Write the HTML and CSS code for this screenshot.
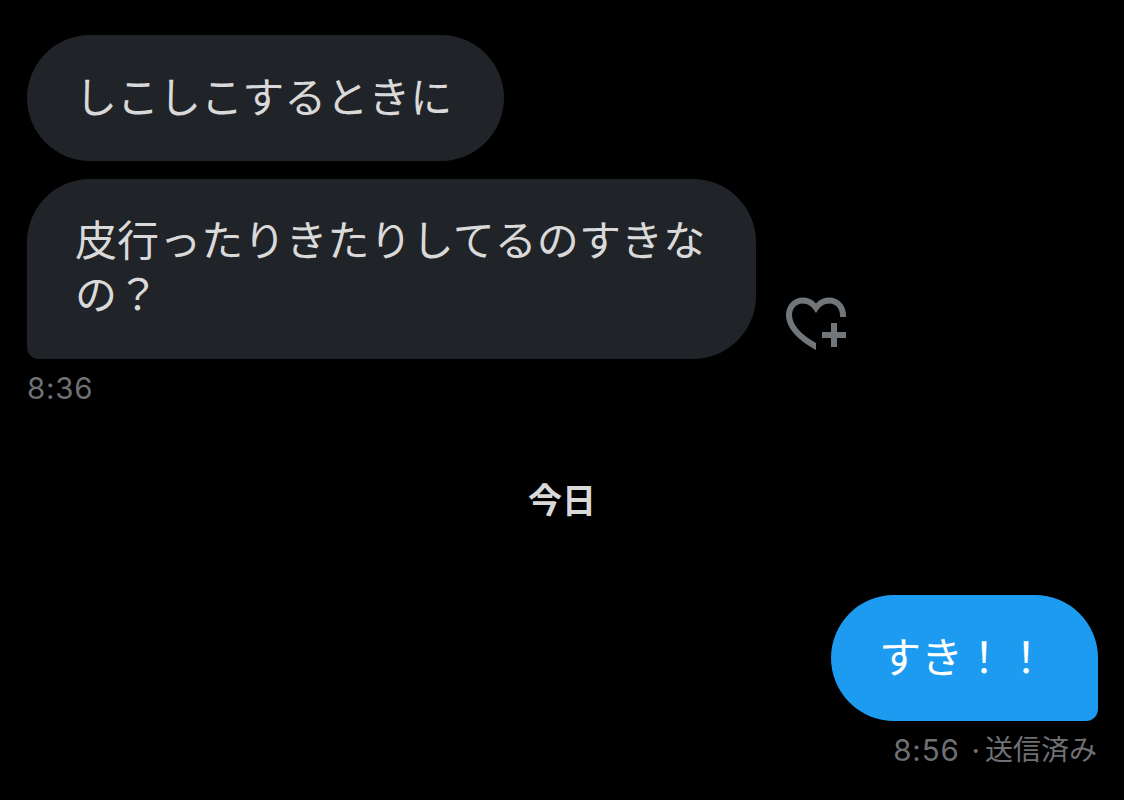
FILE: index.html
```html
<!DOCTYPE html>
<html lang="ja">
<head>
<meta charset="utf-8">
<title>メッセージ</title>
<link rel="stylesheet" href="styles.css">
</head>
<body>
<main class="chat">
  <div class="bubble received">しこしこするときに</div>
  <div class="row">
    <div class="bubble received last">皮行ったりきたりしてるのすきな<br>の？</div>
    <svg class="react" viewBox="0 0 62 54" width="62" height="54" fill="currentColor" aria-label="リアクション">
      <path d="M31 6.500C34.500 2.500 39 .6 44 .6C54 .6 61 8.500 61 18V20H55V18C55 11.500 50.500 6.500 44.500 6.500C39 6.500 35 9.300 31 16C27 9.300 23 6.500 17.500 6.500C11.500 6.500 7 11.500 7 18C7 27.500 16 37.500 31 46V53C12 43 1 30 1 18C1 8.500 8 .6 18 .6C23 .6 27.500 2.500 31 6.500Z"/>
      <path d="M46 26H52V35H61V41H52V50H46V41H37V35H46Z"/>
    </svg>
  </div>
  <time class="time">8:36</time>
  <h2 class="day">今日</h2>
  <div class="bubble sent">すき！！</div>
  <div class="status"><time class="clock">8:56</time><span class="dot">·</span><span class="state">送信済み</span></div>
</main>
</body>
</html>
```
FILE: styles.css
```css
body {
  margin: 0;
  background: #000;
  font-family: Inter, "Noto Sans CJK JP", sans-serif;
}
.chat {
  box-sizing: border-box;
  width: 1124px;
  height: 800px;
  padding: 35px 26px 0 27px;
  display: flex;
  flex-direction: column;
  align-items: flex-start;
  overflow: hidden;
}
.bubble {
  box-sizing: border-box;
  padding: 36px 50px 36px 48px;
  border-radius: 63px;
  font-size: 42px;
  line-height: 54px;
  white-space: nowrap;
}
.received {
  width: 477px;
  background: #202327;
  color: #d9d9d9;
}
.last {
  width: 729px;
  padding-top: 35px;
  padding-bottom: 37px;
  border-bottom-left-radius: 12px;
  letter-spacing: 0.1px;
}
.row {
  display: flex;
  align-items: flex-end;
  gap: 29px;
  margin-top: 18px;
}
.react {
  color: #71767b;
  margin-bottom: 8px;
}
.time {
  margin-top: 11px;
  font-size: 29.500px;
  line-height: 36px;
  letter-spacing: 0.8px;
  color: #6e7074;
}
.day {
  align-self: center;
  margin: 71px 0 0;
  padding-right: 1px;
  font-size: 34px;
  line-height: 48px;
  font-weight: 700;
  color: #d9d9d9;
}
.sent {
  align-self: flex-end;
  width: 267px;
  margin-top: 70px;
  background: #1d9bf0;
  color: #fff;
  border-bottom-right-radius: 12px;
}
.status {
  display: flex;
  align-self: flex-end;
  margin: 11px 1px 0 0;
  font-size: 29.500px;
  line-height: 36px;
  color: #6e7074;
}
.clock {
  letter-spacing: 0.8px;
}
.dot {
  margin: 0 5px 0 12px;
}
.state {
  font-size: 28px;
}
```
